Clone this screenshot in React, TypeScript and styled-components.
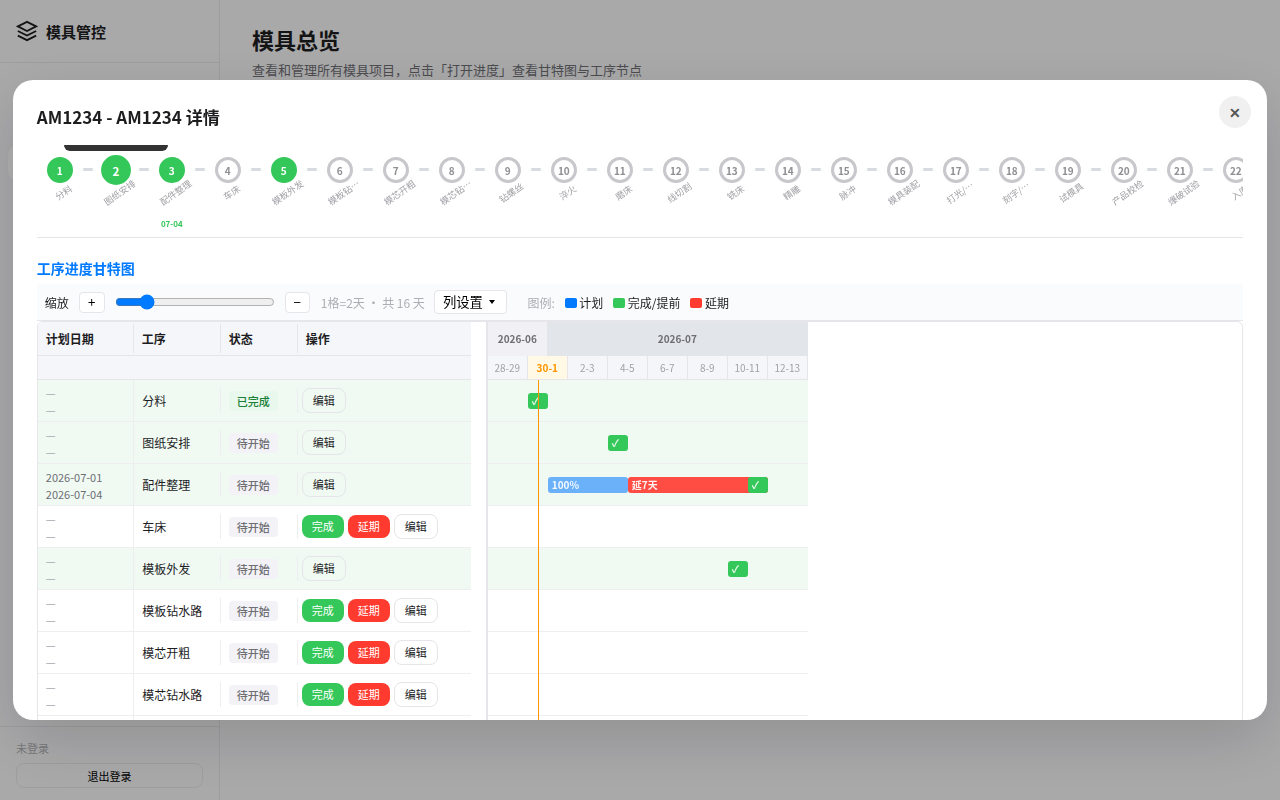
import React from 'react';
import styled, { createGlobalStyle, css } from 'styled-components';

const GlobalStyle = createGlobalStyle`
  *, *::before, *::after { box-sizing: border-box; }
  html, body, #root { height: 100%; margin: 0; }
  body {
    font-family: "Noto Sans CJK SC", sans-serif;
    font-size: 14px;
    color: #1d1d1f;
    background: #f5f5f7;
    overflow: hidden;
  }
  button { font-family: inherit; cursor: pointer; }
`;

const Shell = styled.div`
  display: flex;
  height: 100vh;
  overflow: hidden;
`;

const Sidebar = styled.aside`
  display: flex;
  flex-direction: column;
  width: 220px;
  flex-shrink: 0;
  border-right: 1px solid #e5e5ea;
`;

const Brand = styled.div`
  display: flex;
  align-items: center;
  gap: 8px;
  height: 63px;
  padding: 0 16px;
  border-bottom: 1px solid #e5e5ea;
  font-size: 15px;
  font-weight: 600;
  svg { display: block; }
`;

const Nav = styled.nav`
  flex: 1;
  padding: 82px 8px 0;
`;

const NavItem = styled.div`
  height: 36px;
  border-radius: 10px;
  background: #fff;
`;

const Account = styled.div`
  height: 74px;
  padding: 12px 16px;
  border-top: 1px solid #e5e5ea;
`;

const AccountName = styled.div`
  height: 18px;
  margin-bottom: 6px;
  font-size: 11px;
  line-height: 18px;
  color: #aeaeb2;
`;

const LogoutButton = styled.button`
  display: block;
  width: 100%;
  height: 25px;
  padding: 0;
  border: 1px solid #e5e5ea;
  border-radius: 8px;
  background: transparent;
  font-size: 11px;
  font-weight: 400;
`;

const Main = styled.main`
  flex: 1;
  padding: 24px 32px;
`;

const PageTitle = styled.h1`
  margin: 0 0 4px;
  font-size: 22px;
  line-height: 31px;
  font-weight: 700;
`;

const PageHint = styled.p`
  margin: 0;
  font-size: 13px;
  line-height: 21px;
  color: #6e6e73;
`;

const Overlay = styled.div`
  position: fixed;
  inset: 0;
  display: flex;
  align-items: center;
  justify-content: center;
  background: rgba(0, 0, 0, 0.31);
`;

const Modal = styled.section`
  position: relative;
  width: 98%;
  height: 80vh;
  padding: 24px;
  border-radius: 20px;
  background: #fff;
  box-shadow: 0 20px 60px rgba(0, 0, 0, 0.15);
  overflow: hidden;
`;

const ModalTitle = styled.h2`
  margin: 0 0 15px;
  font-size: 17px;
  line-height: 26px;
  font-weight: 600;
`;

const CloseButton = styled.button`
  position: absolute;
  top: 16px;
  right: 16px;
  display: flex;
  align-items: center;
  justify-content: center;
  width: 32px;
  height: 32px;
  padding: 0 0 1px;
  border: 0;
  border-radius: 50%;
  background: #f0f0f0;
  color: #555;
  font-size: 14px;
  font-weight: 600;
`;

const Steps = styled.div`
  position: relative;
  display: flex;
  height: 93px;
  padding-top: 10px;
  border-bottom: 1px solid #e5e5ea;
  overflow: hidden;
`;

const Tooltip = styled.div`
  position: absolute;
  top: -20px;
  left: 27px;
  width: 104px;
  height: 26px;
  border-radius: 6px;
  background: #333;
`;

const Step = styled.div`
  display: flex;
  flex-direction: column;
  align-items: center;
  width: 46px;
  flex-shrink: 0;
`;

const Link = styled.div`
  width: 10px;
  height: 3px;
  margin-top: 13px;
  flex-shrink: 0;
  border-radius: 1px;
  background: #d8dbe1;
`;

const Dot = styled.div<{ $done?: boolean; $large?: boolean }>`
  display: flex;
  align-items: center;
  justify-content: center;
  width: 26px;
  height: 26px;
  margin: 2px 0;
  padding-top: 1px;
  border: 3px solid #c7c7cc;
  border-radius: 50%;
  background: #fff;
  color: #8e8e93;
  font-size: 10px;
  font-weight: 700;
  ${(p) => p.$done && css`
    border-color: #34c759;
    background: #34c759;
    color: #fff;
  `}
  ${(p) => p.$large && css`
    transform: scale(1.15);
  `}
`;

const StepName = styled.div`
  height: 14px;
  font-size: 9px;
  line-height: 14px;
  white-space: nowrap;
  color: #a1a1a6;
  transform: translate(4px, 1px) rotate(-35deg);
`;

const StepDate = styled.div`
  margin-top: 19px;
  font-size: 8px;
  line-height: 12px;
  font-weight: 600;
  color: #34c759;
`;

const SectionTitle = styled.h3`
  margin: 20px 0 5px;
  font-size: 14px;
  line-height: 21px;
  font-weight: 600;
  color: #007aff;
`;

const Toolbar = styled.div`
  display: flex;
  align-items: center;
  height: 37px;
  padding: 0 8px;
  border-bottom: 1px solid #e5e5ea;
  background: #fafbfd;
  font-size: 12px;
`;

const ZoomButton = styled.button<{ $w: number }>`
  width: ${(p) => p.$w}px;
  height: 21px;
  padding: 0 0 1px;
  border: 1px solid #e5e5ea;
  border-radius: 4px;
  background: #fff;
  font-size: 13.333px;
  line-height: 16px;
  color: #000;
`;

const ZoomRange = styled.input`
  width: 160px;
  height: 16px;
  margin: 0 10px;
  accent-color: #007aff;
`;

const ToolLabel = styled.span`
  margin-right: 10px;
  padding-top: 1px;
`;

const Muted = styled.span`
  padding-top: 1px;
  color: #aeaeb2;
`;

const ScaleNote = styled(Muted)`
  margin-left: 11px;
`;

const ColumnsButton = styled.button`
  display: flex;
  align-items: center;
  gap: 6px;
  width: 73px;
  height: 24px;
  margin: 0 20.5px 0 9px;
  padding: 0 0 1px 8px;
  border: 1px solid #e5e5ea;
  border-radius: 4px;
  background: #fff;
  font-size: 13.333px;
  color: #000;
`;

const Caret = styled.i`
  border: 3px solid transparent;
  border-top: 4px solid #000;
  border-bottom: 0;
`;

const LegendItem = styled.span<{ $color: string }>`
  display: flex;
  align-items: center;
  gap: 2.5px;
  margin-left: 10px;
  padding-top: 1px;
  &::before {
    content: "";
    width: 12px;
    height: 10px;
    border-radius: 2px;
    background: ${(p) => p.$color};
  }
`;

const Gantt = styled.div`
  display: flex;
  border: 1px solid #e5e5ea;
  border-radius: 6px;
  overflow: hidden;
`;

const Table = styled.div`
  width: 433px;
  flex-shrink: 0;
`;

const columns = css`
  display: grid;
  grid-template-columns: 96px 87px 77px 173px;
  align-items: center;
`;

const HeadRow = styled.div`
  ${columns}
  height: 34px;
  border-bottom: 1px solid #e5e5ea;
  background: #f5f6fa;
`;

const HeadCell = styled.div`
  height: 29px;
  padding: 0 8px;
  border-right: 1px solid #e5e5ea;
  font-size: 12px;
  line-height: 30px;
  font-weight: 600;
  &:last-child { border-right: 0; }
`;

const SubHead = styled.div`
  height: 24px;
  border-bottom: 1px solid #e5e5ea;
  background: #f5f6fa;
`;

const Row = styled.div<{ $done?: boolean }>`
  ${columns}
  height: 42px;
  border-bottom: 1px solid #eeeef0;
  background: ${(p) => (p.$done ? '#f0faf3' : '#fff')};
`;

const DateCell = styled.div<{ $empty: boolean }>`
  height: 41px;
  padding: 5px 8px 0;
  border-right: 1px solid #eeeef0;
  font-size: 11px;
  line-height: 17px;
  color: ${(p) => (p.$empty ? '#a8a8ac' : '#6e6e73')};
`;

const NameCell = styled.div`
  padding: 1px 8px 0 8.4px;
  border-right: 1px solid #eeeef0;
  font-size: 12px;
  line-height: 24px;
`;

const StatusCell = styled.div`
  display: flex;
  align-items: center;
  height: 25px;
  padding: 0 8px;
  border-right: 1px solid #eeeef0;
`;

const Status = styled.span<{ $done?: boolean }>`
  height: 20px;
  padding: 0 8px;
  border-radius: 4px;
  background: ${(p) => (p.$done ? '#e8f8ed' : '#f2f2f7')};
  color: ${(p) => (p.$done ? '#1a7f37' : '#6e6e73')};
  font-size: 11px;
  font-weight: 500;
  line-height: 21px;
`;

const Actions = styled.div`
  display: flex;
  align-items: center;
  gap: 4px;
  padding: 0 4px 1px;
`;

const ActionButton = styled.button<{ $kind: 'done' | 'late' | 'edit' }>`
  height: ${(p) => (p.$kind === 'edit' ? 25 : 23)}px;
  width: ${(p) => (p.$kind === 'edit' ? 44 : 42)}px;
  padding: 0;
  border: ${(p) => (p.$kind === 'edit' ? '1px solid #e5e5ea' : '0')};
  border-radius: 8px;
  background: ${(p) => ({ done: '#34c759', late: '#ff3b30', edit: 'transparent' })[p.$kind]};
  color: ${(p) => (p.$kind === 'edit' ? '#1d1d1f' : '#fff')};
  font-size: 11px;
  font-weight: 400;
`;

const Chart = styled.div`
  position: relative;
  width: 322px;
  margin-left: 15px;
  flex-shrink: 0;
  border-left: 2px solid #e5e5ea;
`;

const Months = styled.div`
  display: grid;
  grid-template-columns: 59px 1fr;
  height: 34px;
  border-bottom: 1px solid #e5e5ea;
`;

const Month = styled.div<{ $alt?: boolean }>`
  background: ${(p) => (p.$alt ? '#e2e5ea' : '#f0f0f5')};
  color: #6e6e73;
  font-size: 10px;
  font-weight: 600;
  line-height: 34px;
  text-align: center;
`;

const Days = styled.div`
  display: grid;
  grid-template-columns: repeat(8, 40px);
  height: 24px;
  border-bottom: 1px solid #e5e5ea;
`;

const Day = styled.div<{ $today: boolean }>`
  height: 23px;
  border-right: 1px solid #e5e5ea;
  background: ${(p) => (p.$today ? '#fff9e6' : '#f5f6fa')};
  color: ${(p) => (p.$today ? '#ff9500' : '#a1a1a6')};
  font-size: 10px;
  font-weight: ${(p) => (p.$today ? 700 : 400)};
  line-height: 24px;
  text-align: center;
`;

const Lane = styled.div<{ $done?: boolean }>`
  display: grid;
  grid-template-columns: repeat(16, 20px);
  align-items: center;
  height: 42px;
  border-bottom: 1px solid #eeeef0;
  background: ${(p) => (p.$done ? '#f0faf3' : '#fff')};
`;

const Bar = styled.div<{ $from: number; $to: number; $color: string }>`
  grid-row: 1;
  grid-column: ${(p) => p.$from} / ${(p) => p.$to};
  height: 16px;
  padding-left: 4px;
  margin-top: 1px;
  border-radius: 3px;
  background: ${(p) => p.$color};
  color: rgba(255, 255, 255, 0.92);
  font-size: 10px;
  font-weight: 600;
  line-height: 16px;
  white-space: nowrap;
`;

const TodayLine = styled.div`
  position: absolute;
  top: 58px;
  bottom: 0;
  left: 50px;
  width: 1px;
  background: #ff9500;
`;

const steps = [
  '分料', '图纸安排', '配件整理', '车床', '模板外发', '模板钻水路', '模芯开粗', '模芯钻水路',
  '钻螺丝', '淬火', '磨床', '线切割', '铣床', '精雕', '脉冲', '模具装配', '打光/抛光', '刻字/打标',
  '试模具', '产品校检', '爆破试验', '入库',
];
const doneSteps = [0, 1, 2, 4];
const shorten = (name: string) => (name.length > 4 ? `${name.slice(0, 3)}…` : name);

const GREEN = '#34c759';

interface BarData { from: number; to: number; color: string; label: string }
interface Task {
  name: string;
  done?: boolean;
  finished?: boolean;
  dates?: [string, string];
  bars?: BarData[];
}

const tasks: Task[] = [
  { name: '分料', done: true, finished: true, bars: [{ from: 3, to: 4, color: GREEN, label: '✓' }] },
  { name: '图纸安排', done: true, bars: [{ from: 7, to: 8, color: GREEN, label: '✓' }] },
  {
    name: '配件整理',
    done: true,
    dates: ['2026-07-01', '2026-07-04'],
    bars: [
      { from: 4, to: 8, color: '#6bb1fa', label: '100%' },
      { from: 8, to: 15, color: '#ff4d43', label: '延7天' },
      { from: 14, to: 15, color: GREEN, label: '✓' },
    ],
  },
  { name: '车床' },
  { name: '模板外发', done: true, bars: [{ from: 13, to: 14, color: GREEN, label: '✓' }] },
  { name: '模板钻水路' },
  { name: '模芯开粗' },
  { name: '模芯钻水路' },
];

const days = ['28-29', '30-1', '2-3', '4-5', '6-7', '8-9', '10-11', '12-13'];

const LayersIcon = () => (
  <svg width="22" height="22" viewBox="0 0 24 24" fill="none" stroke="currentColor" strokeWidth="2">
    <path d="M12 2 2 7l10 5 10-5-10-5z" />
    <path d="m2 17 10 5 10-5" />
    <path d="m2 12 10 5 10-5" />
  </svg>
);

export default function App() {
  return (
    <>
      <GlobalStyle />
      <Shell>
        <Sidebar>
          <Brand><LayersIcon />模具管控</Brand>
          <Nav><NavItem /></Nav>
          <Account>
            <AccountName>未登录</AccountName>
            <LogoutButton>退出登录</LogoutButton>
          </Account>
        </Sidebar>
        <Main>
          <PageTitle>模具总览</PageTitle>
          <PageHint>查看和管理所有模具项目，点击「打开进度」查看甘特图与工序节点</PageHint>
        </Main>
      </Shell>
      <Overlay>
        <Modal>
          <CloseButton>✕</CloseButton>
          <ModalTitle>AM1234 - AM1234 详情</ModalTitle>
          <Steps>
            {steps.map((name, i) => (
              <React.Fragment key={name}>
                {i > 0 && <Link />}
                <Step>
                  <Dot $done={doneSteps.includes(i)} $large={i === 1}>{i + 1}</Dot>
                  <StepName>{shorten(name)}</StepName>
                  {i === 2 && <StepDate>07-04</StepDate>}
                </Step>
              </React.Fragment>
            ))}
            <Tooltip />
          </Steps>
          <SectionTitle>工序进度甘特图</SectionTitle>
          <Toolbar>
            <ToolLabel>缩放</ToolLabel>
            <ZoomButton $w={26}>+</ZoomButton>
            <ZoomRange type="range" min={0} max={100} defaultValue={17} />
            <ZoomButton $w={25}>−</ZoomButton>
            <ScaleNote>1格=2天 · 共 16 天</ScaleNote>
            <ColumnsButton>列设置 <Caret /></ColumnsButton>
            <Muted>图例:</Muted>
            <LegendItem $color="#007aff">计划</LegendItem>
            <LegendItem $color={GREEN}>完成/提前</LegendItem>
            <LegendItem $color="#ff3b30">延期</LegendItem>
          </Toolbar>
          <Gantt>
            <Table>
              <HeadRow>
                <HeadCell>计划日期</HeadCell>
                <HeadCell>工序</HeadCell>
                <HeadCell>状态</HeadCell>
                <HeadCell>操作</HeadCell>
              </HeadRow>
              <SubHead />
              {tasks.map((t) => (
                <Row key={t.name} $done={t.done}>
                  <DateCell $empty={!t.dates}>
                    <div>{t.dates ? t.dates[0] : '—'}</div>
                    <div>{t.dates ? t.dates[1] : '—'}</div>
                  </DateCell>
                  <NameCell>{t.name}</NameCell>
                  <StatusCell>
                    <Status $done={t.finished}>{t.finished ? '已完成' : '待开始'}</Status>
                  </StatusCell>
                  <Actions>
                    {!t.done && <ActionButton $kind="done">完成</ActionButton>}
                    {!t.done && <ActionButton $kind="late">延期</ActionButton>}
                    <ActionButton $kind="edit">编辑</ActionButton>
                  </Actions>
                </Row>
              ))}
              <Row><DateCell $empty /></Row>
            </Table>
            <Chart>
              <Months>
                <Month>2026-06</Month>
                <Month $alt>2026-07</Month>
              </Months>
              <Days>
                {days.map((d) => <Day key={d} $today={d === '30-1'}>{d}</Day>)}
              </Days>
              {tasks.map((t) => (
                <Lane key={t.name} $done={t.done}>
                  {t.bars?.map((b) => (
                    <Bar key={b.from} $from={b.from} $to={b.to} $color={b.color}>{b.label}</Bar>
                  ))}
                </Lane>
              ))}
              <TodayLine />
            </Chart>
          </Gantt>
        </Modal>
      </Overlay>
    </>
  );
}
